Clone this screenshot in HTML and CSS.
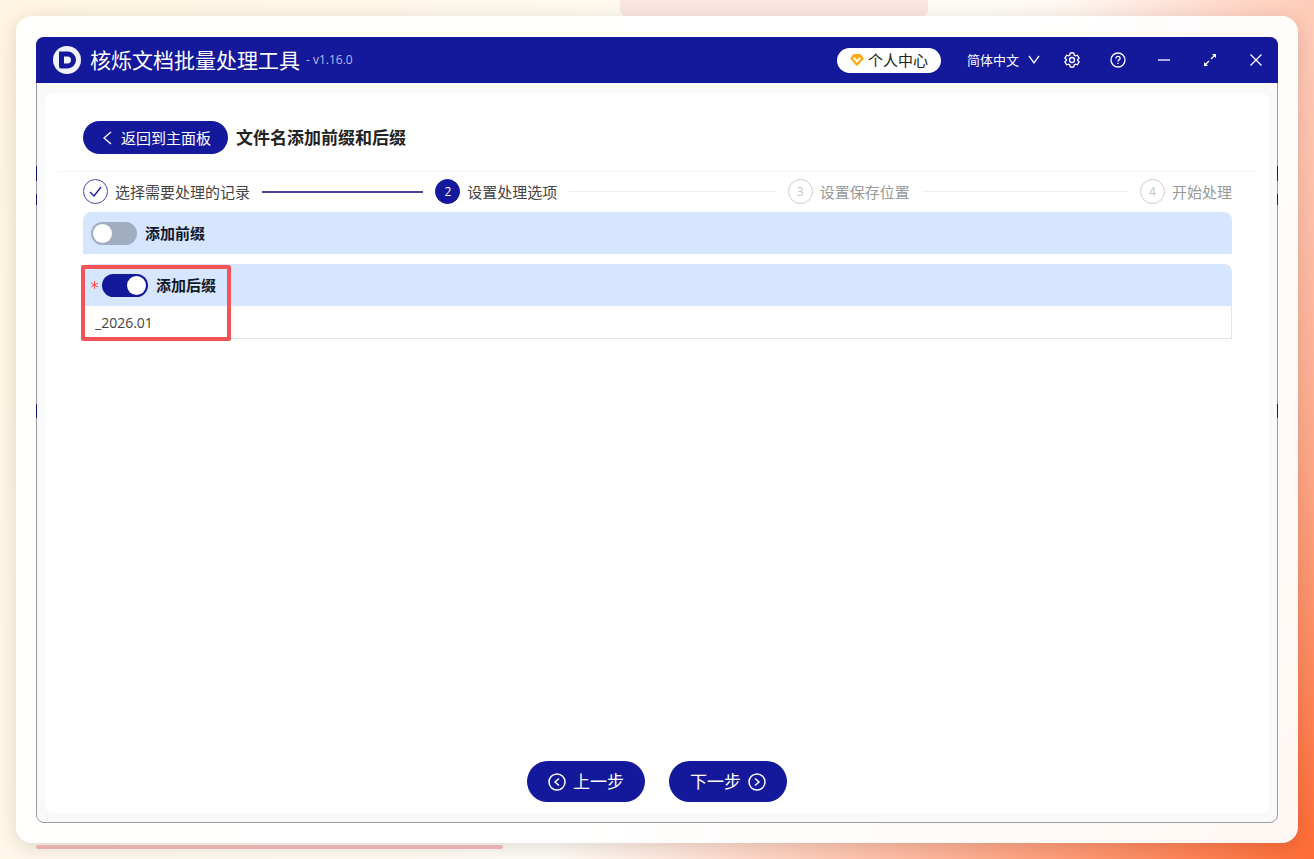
FILE: index.html
```html
<!DOCTYPE html>
<html lang="zh-CN">
<head>
    <meta charset="UTF-8">
    <meta name="viewport" content="width=device-width, initial-scale=1.0">
    <title>核烁文档批量处理工具</title>
    <link rel="stylesheet" href="styles.css">
</head>
<body>
    <div class="shape shape-top"></div>
    <div class="shape shape-bottom"></div>
    <div class="frame">
        <div class="window">
            <header class="titlebar">
                <svg class="logo" viewBox="0 0 28 28">
                    <circle cx="14" cy="14" r="14" fill="#f1f3fb"/>
                    <path fill="#14189a" fill-rule="evenodd" d="M6 5.500h8.500a8.500 8.500 0 0 1 0 17H8a2 2 0 0 1-2-2zM11 10.500v7h3.500a3.500 3.500 0 0 0 0-7z"/>
                </svg>
                <h1>核烁文档批量处理工具</h1>
                <span class="version">- v1.16.0</span>
                <button type="button" class="account">
                    <svg width="14" height="14" viewBox="0 0 14 14">
                        <path fill="#faad14" stroke="#faad14" stroke-width="1" stroke-linejoin="round" d="M3.500 1.500h7L13.500 5.500 7 12.800 .5 5.500z"/>
                        <path fill="none" stroke="#fff" stroke-width="1.800" d="M4 4.800L7 8.300l3-3.500"/>
                    </svg>
                    个人中心
                </button>
                <label class="language">
                    <select aria-label="语言">
                        <option>简体中文</option>
                    </select>
                    <svg width="12" height="12" viewBox="0 0 12 12"><path d="M1 2l5 7 5-7"/></svg>
                </label>
                <div class="window-buttons">
                    <button type="button" aria-label="设置">
                        <svg width="16" height="16" viewBox="0 0 16 16">
                            <path d="M6.300 1h3.400l.5 2.100 1.200.7 2-.6 1.700 2.900L13.600 7.600v.8l1.500 1.500-1.700 2.900-2-.6-1.200.7L9.700 15H6.300l-.5-2.100-1.200-.7-2 .6L.9 9.900l1.500-1.500v-.8L.9 6.100l1.700-2.900 2 .6 1.200-.7z"/>
                            <circle cx="8" cy="8" r="2.500"/>
                        </svg>
                    </button>
                    <button type="button" aria-label="帮助">
                        <svg width="16" height="16" viewBox="0 0 16 16">
                            <circle cx="8" cy="8" r="7"/>
                            <path d="M5.900 6.500c0-1.300 1-2.100 2.100-2.100s2.100.8 2.100 2c0 1.500-2.100 1.500-2.100 3.100M8 10.700v1.200"/>
                        </svg>
                    </button>
                    <button type="button" aria-label="最小化">
                        <svg width="16" height="16" viewBox="0 0 16 16"><path d="M2 8h12"/></svg>
                    </button>
                    <button type="button" aria-label="最大化">
                        <svg width="16" height="16" viewBox="0 0 16 16">
                            <path d="M9 7l4-4M7 9l-4 4"/>
                            <path fill="#fff" stroke="none" d="M14 2v4L10 2zM2 14v-4L6 14z"/>
                        </svg>
                    </button>
                    <button type="button" aria-label="关闭">
                        <svg width="16" height="16" viewBox="0 0 16 16"><path d="M2.500 2.500l11 11M13.500 2.500l-11 11"/></svg>
                    </button>
                </div>
            </header>
            <main class="panel">
                <div class="page-head">
                    <button type="button" class="back">
                        <svg width="12" height="14" viewBox="0 0 12 14"><path d="M10 1L3 7l7 6"/></svg>
                        返回到主面板
                    </button>
                    <h2>文件名添加前缀和后缀</h2>
                </div>
                <div class="content">
                    <ol class="steps">
                        <li class="step done">
                            <span class="step-icon">
                                <svg width="13" height="13" viewBox="0 0 13 13"><path d="M1 7l4 4 7-9"/></svg>
                            </span>
                            选择需要处理的记录
                        </li>
                        <li class="step active"><span class="step-icon">2</span>设置处理选项</li>
                        <li class="step"><span class="step-icon">3</span>设置保存位置</li>
                        <li class="step"><span class="step-icon">4</span>开始处理</li>
                    </ol>
                    <form id="options-form">
                        <div class="option">
                            <div class="option-head">
                                <input type="checkbox" class="switch" id="prefix">
                                <label for="prefix">添加前缀</label>
                            </div>
                        </div>
                        <div class="option">
                            <div class="option-head">
                                <svg class="required" width="7" height="8" viewBox="0 0 7 8"><path d="M3.500 0v8M0 2l7 4M7 2L0 6"/></svg>
                                <input type="checkbox" class="switch" id="suffix" checked>
                                <label for="suffix">添加后缀</label>
                            </div>
                            <input type="text" class="option-text" aria-label="后缀" value="_2026.01">
                            <div class="highlight"></div>
                        </div>
                    </form>
                </div>
                <div class="actions">
                    <button type="button">
                        <svg width="18" height="18" viewBox="0 0 18 18"><circle cx="9" cy="9" r="8"/><path d="M11 5.500L7 9l4 3.500"/></svg>
                        上一步
                    </button>
                    <button type="button">
                        下一步
                        <svg width="18" height="18" viewBox="0 0 18 18"><circle cx="9" cy="9" r="8"/><path d="M7 5.500L11 9l-4 3.500"/></svg>
                    </button>
                </div>
            </main>
        </div>
    </div>
</body>
</html>
```

FILE: styles.css
```css
* {
    box-sizing: border-box;
}
body {
    position: relative;
    display: flex;
    min-height: 100vh;
    margin: 0;
    padding: 16px;
    overflow: hidden;
    font-family: "Open Sans", "Noto Sans CJK SC", sans-serif;
    font-size: 15px;
    line-height: 20px;
    color: #444;
    background:
        radial-gradient(240px 500px at 100% 0, rgba(255, 107, 53, 0.28), rgba(255, 107, 53, 0)),
        radial-gradient(760px 950px at 100% 100%, #ff6b35, rgba(255, 107, 53, 0)),
        linear-gradient(115deg, #fff5e0, #fff 75%);
}
button, input, select {
    font: inherit;
    color: inherit;
}
button {
    display: flex;
    align-items: center;
    justify-content: center;
    padding: 0;
    border: none;
    background: none;
    cursor: pointer;
}
button svg, .language svg {
    flex: none;
    fill: none;
    stroke: #fff;
    stroke-width: 1.300;
}

/* background decoration */
.shape {
    position: absolute;
}
.shape-top {
    top: 0;
    left: 620px;
    width: 308px;
    height: 17px;
    border-radius: 0 0 8px 8px;
    background: #fbe6e4;
}
.shape-bottom {
    bottom: 10px;
    left: 36px;
    width: 467px;
    height: 4px;
    z-index: 1;
    border-radius: 2px;
    background: #e9b0b3;
}

.frame {
    position: relative;
    display: flex;
    flex: 1;
    padding: 21px 20px 20px;
    border-radius: 16px;
    background: rgba(255, 255, 255, 0.94);
    box-shadow: 0 4px 20px rgba(0, 0, 0, 0.14);
}
.window {
    position: relative;
    display: flex;
    flex-direction: column;
    flex: 1;
    border: 1px solid #9c9ca0;
    border-radius: 8px;
    background: #f9f9fa;
}
/* marks along both window edges */
.window::before, .window::after {
    content: "";
    position: absolute;
    top: 128px;
    left: -1px;
    width: 1px;
    height: 252px;
    background: linear-gradient(#14186a 15px, transparent 15px 28px, #14186a 28px 39px, transparent 39px 238px, #14186a 238px);
}
.window::after {
    right: -1px;
    left: auto;
}

/* title bar */
.titlebar {
    display: flex;
    align-items: center;
    height: 46px;
    margin: -1px -1px 0;
    padding: 0 11px 0 17px;
    border-radius: 8px 8px 0 0;
    background: #14189a;
    color: #fff;
}
.logo {
    width: 28px;
    height: 28px;
    margin-right: 9px;
}
h1 {
    margin: 0;
    font-size: 21px;
    font-weight: normal;
    line-height: 28px;
}
.version {
    margin-left: 6px;
    font-size: 12px;
    color: #b9bbea;
}
.account {
    gap: 4px;
    height: 25px;
    margin-left: auto;
    padding: 0 13px;
    border-radius: 13px;
    background: #fff;
    color: #222;
}
.language {
    display: flex;
    align-items: center;
    gap: 8px;
    margin: 0 21px 0 26px;
    font-size: 13px;
}
.language select {
    padding: 0;
    border: none;
    background: none;
    appearance: none;
}
.window-buttons {
    display: flex;
    gap: 24px;
}
.window-buttons button {
    width: 22px;
    height: 22px;
}

/* main panel */
.panel {
    display: flex;
    flex-direction: column;
    flex: 1;
    margin: 10px 8px 9px;
    padding: 10px 12px 11px;
    border-radius: 8px;
    background: #fff;
}
.page-head {
    display: flex;
    align-items: center;
    gap: 8px;
    padding: 18px 26px 17px;
    border-bottom: 1px solid #f5f5f6;
}
.back {
    gap: 8px;
    height: 33px;
    padding: 0 17px 0 18px;
    border-radius: 17px;
    background: #14189a;
    color: #fff;
}
h2 {
    margin: 0;
    font-size: 17px;
    line-height: 24px;
    color: #222;
}
.content {
    flex: 1;
    padding: 7px 25px 0 26px;
}

.steps {
    display: flex;
    margin: 0 0 8px;
    padding: 0;
    list-style: none;
}
.step {
    display: flex;
    align-items: center;
    flex: 1;
    color: #999;
}
.step:last-child {
    flex: none;
}
.step:not(:last-child)::after {
    content: "";
    flex: 1;
    height: 1px;
    margin: 0 12px;
    background: #efefef;
}
.step-icon {
    display: flex;
    align-items: center;
    justify-content: center;
    width: 25px;
    height: 25px;
    margin-right: 7px;
    border: 1px solid #d0d0d0;
    border-radius: 50%;
    font-size: 12px;
    color: #c4c4c4;
}
.step-icon svg {
    fill: none;
    stroke: #14189a;
    stroke-width: 1.300;
}
.done, .active {
    color: #444;
}
.done .step-icon {
    border-color: #4a4aa8;
}
.step.done::after {
    height: 2px;
    background: #4a459c;
}
.active .step-icon {
    border-color: #14189a;
    background: #14189a;
    color: #fff;
}

/* options */
.option {
    position: relative;
    margin-bottom: 10px;
}
.option-head {
    display: flex;
    align-items: center;
    gap: 8px;
    height: 42px;
    padding: 0 8px;
    border-radius: 8px 8px 0 0;
    background: #d7e6ff;
    font-weight: bold;
    color: #111827;
}
.required {
    margin-right: -4px;
    fill: none;
    stroke: #ff4d4f;
}
.switch {
    display: flex;
    align-items: center;
    width: 46px;
    height: 23px;
    margin: 0;
    padding: 2px;
    border-radius: 12px;
    background: #a1adc0;
    appearance: none;
    cursor: pointer;
}
.switch::before {
    content: "";
    width: 19px;
    height: 19px;
    border-radius: 50%;
    background: #fff;
}
.switch:checked {
    justify-content: flex-end;
    background: #14189a;
}
.option-text {
    display: block;
    width: 100%;
    height: 33px;
    padding: 0 11px;
    border: 1px solid #e4e4e4;
    border-top: none;
    background: #fff;
    font-size: 14px;
}
.highlight {
    position: absolute;
    top: 1px;
    left: -2px;
    width: 150px;
    height: 76px;
    border: 4px solid #f45456;
    border-radius: 2px;
    pointer-events: none;
}

.actions {
    display: flex;
    justify-content: center;
    gap: 24px;
}
.actions button {
    gap: 7px;
    width: 118px;
    height: 41px;
    border-radius: 21px;
    background: #14189a;
    font-size: 17px;
    color: #fff;
}
.actions svg {
    stroke-width: 1.500;
}
```
